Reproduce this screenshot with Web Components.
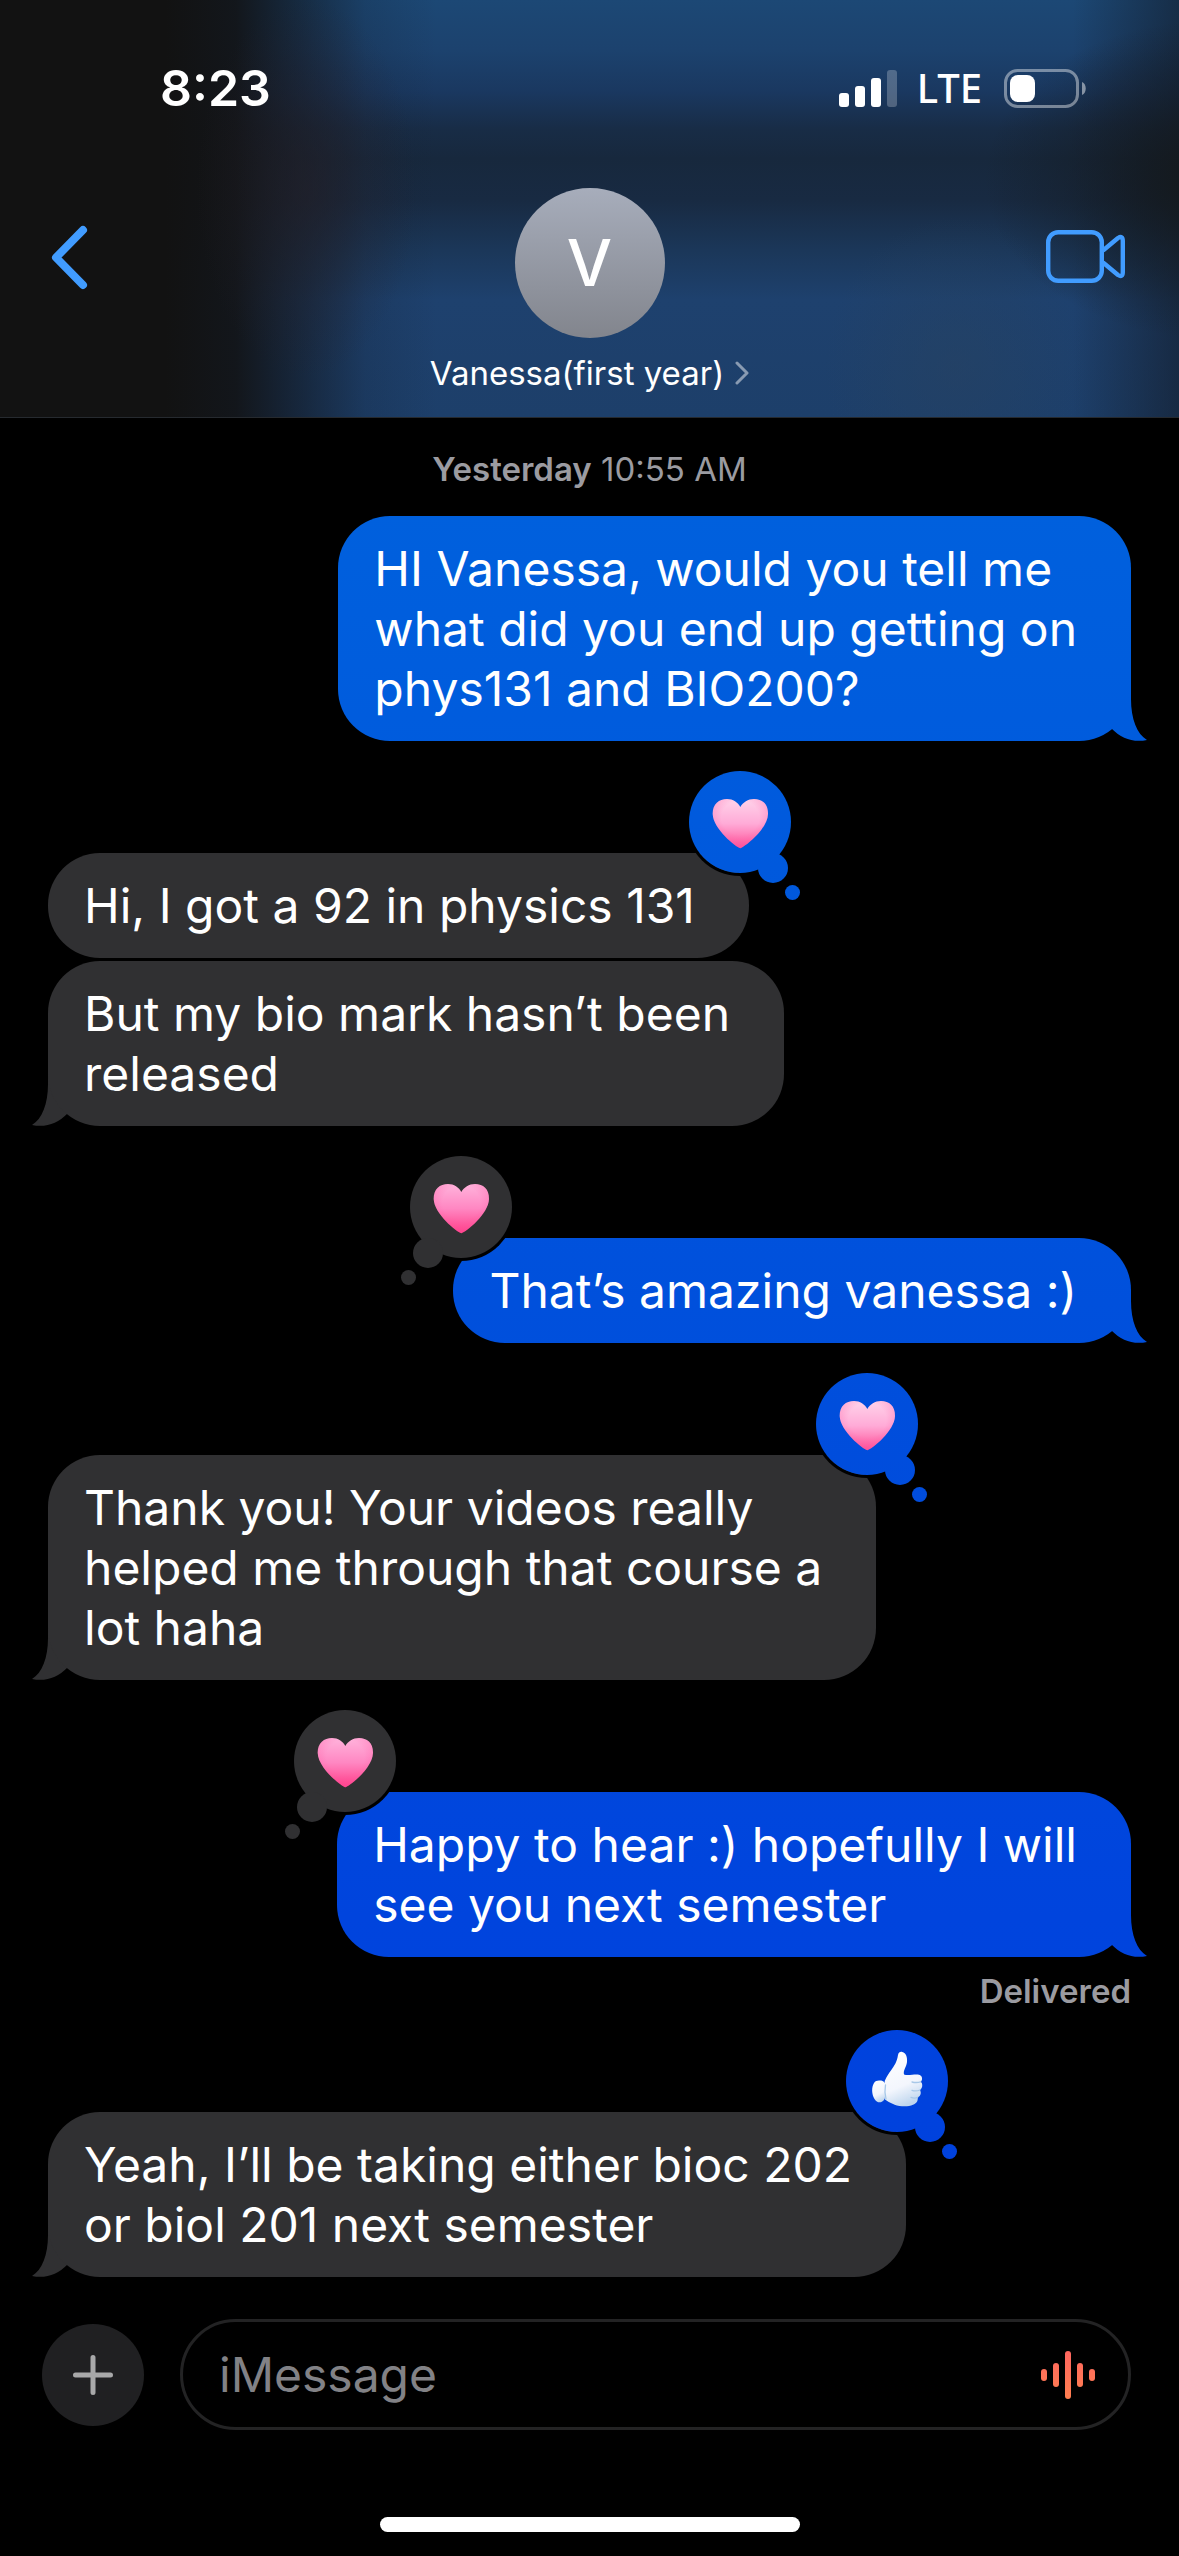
<!DOCTYPE html>
<html lang="en">
<head>
<meta charset="utf-8">
<meta name="viewport" content="width=device-width, initial-scale=1">
<title>Messages</title>
<style>
  :root {
    --sent: linear-gradient(180deg, #0064dc 0%, #0060dd 20%, #005add 32%, #0050dc 51%, #0044dd 75%, #0040dd 90%) fixed;
    --received: #303032;
    --tint: #419cff;
    --muted: #9b9ba1;
  }
  html { background: #000; }
  body {
    margin: 0;
    min-height: 100vh;
    display: flex;
    flex-direction: column;
    background: #000;
    color: #fff;
    font-family: Inter, "Noto Sans", sans-serif;
    font-size: 48px;
    line-height: 60px;
  }
  message-list { flex: 1; }
  chat-message { margin-top: 3px; }
  chat-message[first] { margin-top: 27px; }
  chat-message[reaction] { margin-top: 112px; }
  delivery-receipt + chat-message[reaction] { margin-top: 101px; }
</style>
</head>
<body>
<chat-header>
  <status-bar slot="status" time="8:23" network="LTE"></status-bar>
  <contact-button slot="contact" initial="V">Vanessa(first year)</contact-button>
</chat-header>

<message-list>
  <time-stamp day="Yesterday">10:55 AM</time-stamp>
  <chat-message first sent tail>HI Vanessa, would you tell me<br>what did you end up getting on<br>phys131 and BIO200?</chat-message>
  <chat-message reaction="heart">Hi, I got a 92 in physics 131</chat-message>
  <chat-message tail>But my bio mark hasn’t been<br>released</chat-message>
  <chat-message sent tail reaction="heart">That’s amazing vanessa :)</chat-message>
  <chat-message tail reaction="heart">Thank you! Your videos really<br>helped me through that course a<br>lot haha</chat-message>
  <chat-message sent tail reaction="heart">Happy to hear :) hopefully I will<br>see you next semester</chat-message>
  <delivery-receipt>Delivered</delivery-receipt>
  <chat-message tail reaction="thumb">Yeah, I’ll be taking either bioc 202<br>or biol 201 next semester</chat-message>
</message-list>

<message-composer placeholder="iMessage"></message-composer>
<home-indicator></home-indicator>

<script>
function define(name, render) {
  customElements.define(name, class extends HTMLElement {
    connectedCallback() {
      if (this.shadowRoot) return;
      this.attachShadow({ mode: 'open' }).innerHTML = render(this);
    }
  });
}

define('status-bar', el => `
  <style>
    :host { display: flex; justify-content: space-between; align-items: center; height: 60px; padding: 58px 92px 0 160px; }
    time { font-weight: 600; font-size: 50px; line-height: 60px; }
    .right { display: flex; align-items: center; }
    .net { font-family: "Noto Sans", Inter, sans-serif; font-size: 40px; font-weight: 500; line-height: 60px; margin: 0 22px 0 20px; }
    svg { display: block; }
  </style>
  <time>${el.getAttribute('time')}</time>
  <div class="right">
    <svg width="58" height="38" viewBox="0 0 58 38" fill="#fff" aria-hidden="true">
      <rect x="0" y="24" width="10" height="14" rx="3"/><rect x="16" y="17" width="10" height="21" rx="3"/>
      <rect x="32" y="9" width="10" height="29" rx="3"/><rect x="48" y="1" width="10" height="37" rx="3" opacity=".24"/>
    </svg>
    <span class="net">${el.getAttribute('network')}</span>
    <svg width="83" height="39" viewBox="0 0 83 39" aria-hidden="true">
      <rect x="1.5" y="1.5" width="72" height="36" rx="12" fill="none" stroke="#fff" stroke-opacity=".42" stroke-width="3"/>
      <rect x="6" y="6" width="25" height="27" rx="8" fill="#fff"/>
      <path d="M78 13C83 15 83 24 78 26Z" fill="#fff" fill-opacity=".48"/>
    </svg>
  </div>`);

define('contact-button', el => `
  <style>
    :host { display: block; }
    button { display: flex; flex-direction: column; align-items: center; gap: 15px; padding: 0; border: 0; background: none; color: #fff; font: inherit; }
    .avatar { width: 150px; height: 150px; border-radius: 50%; display: grid; place-items: center;
      background: linear-gradient(#a7adbb, #82858d); font-size: 64px; font-weight: 500; line-height: 64px; }
    .name { display: flex; align-items: center; gap: 11px; font-size: 33px; line-height: 40px; }
  </style>
  <button type="button">
    <span class="avatar"><span>${el.getAttribute('initial')}</span></span>
    <span class="name"><slot></slot><svg width="14" height="24" viewBox="0 0 14 24" fill="none" stroke="#fff" stroke-opacity=".48" stroke-width="3" stroke-linecap="round" stroke-linejoin="round" aria-hidden="true"><path d="M2 2L12 12L2 22"/></svg></span>
  </button>`);

define('chat-header', () => `
  <style>
    :host { display: block; border-bottom: 1px solid #262a2f;
      background:
        radial-gradient(ellipse 110px 190px at 26% 45%, rgba(40,34,42,.5), transparent),
        linear-gradient(90deg, #121212 0%, #121212 14%, rgba(18,19,21,.93) 20%, rgba(18,22,28,.62) 25%, rgba(20,32,48,.2) 31%, transparent 37%),
        radial-gradient(ellipse 230px 160px at 103% 43%, rgba(20,24,26,.95), rgba(20,26,32,.5) 50%, transparent),
        linear-gradient(90deg, transparent 91%, rgba(18,24,34,.55) 100%),
        radial-gradient(ellipse 130px 150px at 81% 88%, rgba(38,66,98,.6), transparent),
        linear-gradient(180deg, #1c4875 0%, #1c426e 12%, #1a3860 22%, #182c46 31%, #17283d 38%, #182a42 48%, #1b3759 60%, #1e416e 72%, #1d3f6a 100%);
    }
    nav { display: grid; grid-template-columns: 1fr auto 1fr; align-items: start; padding: 70px 51px 24px; }
    .icon { padding: 0; border: 0; background: none; color: var(--tint); margin-top: 36px; }
    .video { justify-self: end; margin-top: 42px; }
    .back { justify-self: start; }
    svg { display: block; }
  </style>
  <slot name="status"></slot>
  <nav>
    <button class="icon back" type="button" aria-label="Back">
      <svg width="40" height="67" viewBox="0 0 40 67" fill="none" stroke="currentColor" stroke-width="8" stroke-linecap="round" stroke-linejoin="round"><path d="M32 6L5 33.500L32 61"/></svg>
    </button>
    <slot name="contact"></slot>
    <button class="icon video" type="button" aria-label="Video call">
      <svg width="82" height="54" viewBox="0 0 82 54" fill="none" stroke="currentColor" stroke-width="4.400" stroke-linejoin="round"><rect x="2.200" y="2.200" width="53.600" height="48.600" rx="10"/><path d="M57 20.500L72 8Q76.800 5 76.800 11V42Q76.800 48 72 45L57 32.500"/></svg>
    </button>
  </nav>`);

define('message-list', () => `
  <style>:host { display: flex; flex-direction: column; padding: 31px 48px 0; }</style>
  <slot></slot>`);

define('time-stamp', el => `
  <style>
    :host { display: block; text-align: center; color: var(--muted); font-size: 33px; line-height: 40px; }
    b { font-weight: 600; }
  </style>
  <b>${el.getAttribute('day')}</b> <slot></slot>`);

define('delivery-receipt', () => `
  <style>:host { display: block; margin-top: 14px; text-align: right; color: var(--muted); font-size: 33px; font-weight: 600; line-height: 40px; }</style>
  <slot></slot>`);

define('chat-message', el => `
  <style>
    :host { display: block; position: relative; isolation: isolate; width: fit-content; align-self: flex-start; }
    :host([sent]) { align-self: flex-end; }
    .bubble { padding: 23px 54px 22px 36px; border-radius: 52px; background: var(--received); white-space: nowrap; }
    :host([sent]) .bubble { background: var(--sent); }
    :host([tail])::after { content: ""; position: absolute; z-index: -1; bottom: 0; left: -16px; width: 64px; height: 52px;
      background: var(--received); clip-path: path("M64 0L16 0L16 10C16 30 10 45 0 51C14 54 26 49 35 40L64 10Z"); }
    :host([sent][tail])::after { left: auto; right: -16px; background: var(--sent);
      clip-path: path("M0 0L48 0L48 10C48 30 54 45 64 51C50 54 38 49 29 40L0 10Z"); }
    tap-back { position: absolute; top: -82px; right: -42px; }
    :host([sent]) tap-back { right: auto; left: -43px; }
  </style>
  <div class="bubble"><slot></slot></div>
  ${el.hasAttribute('reaction') ? `<tap-back kind="${el.getAttribute('reaction')}" ${el.hasAttribute('sent') ? 'theirs' : ''}></tap-back>` : ''}`);

const reactions = {
  heart: theirs => `
    <defs>
      <linearGradient id="g" x1="0" y1="0" x2="0" y2="1"><stop offset="0" stop-color="${theirs ? '#ffb3dc' : '#ffd3ea'}"/><stop offset=".5" stop-color="${theirs ? '#ff87c2' : '#ffabd7'}"/><stop offset="1" stop-color="${theirs ? '#ff3e88' : '#ff5299'}"/></linearGradient>
      <radialGradient id="s" cx=".5" cy=".38" r=".62"><stop offset=".55" stop-color="#ff4f9c" stop-opacity="0"/><stop offset="1" stop-color="#ff4f9c" stop-opacity=".38"/></radialGradient>
    </defs>
    <path fill="url(#g)" d="M51.300 77.300C47 76 24 58 23.700 43C23.500 33 30 28 38 28C44 28 49 31.500 51.300 36C54 31.500 59 28 65 28C73 28 79.300 33 79 43C78.700 58 56 76 51.300 77.300Z"/>
    <path fill="url(#s)" d="M51.300 77.300C47 76 24 58 23.700 43C23.500 33 30 28 38 28C44 28 49 31.500 51.300 36C54 31.500 59 28 65 28C73 28 79.300 33 79 43C78.700 58 56 76 51.300 77.300Z"/>`,
  thumb: () => `
    <defs>
      <linearGradient id="t" x1=".2" y1="0" x2=".5" y2="1"><stop offset="0" stop-color="#fff"/><stop offset=".65" stop-color="#f3f6fd"/><stop offset="1" stop-color="#bfd6ee"/></linearGradient>
    </defs>
    <path fill="url(#t)" d="M38.700 51C41 46 43 43 45.300 40C48 36 51 32 52 25C52.500 22 54.500 21.600 56.300 22C60 23 61.500 27 61 32C60.500 37 57 40 58 44.500C62 46 68 44 73 44.700C76.500 45.500 77 50 74.700 51.700C76.800 53 77 58 73.900 60C75.500 62.500 75 66 71.700 67.300C72.200 71 70.500 73.500 67 74.700C62 77 54 76.500 48.700 74.700C44 73 41 71 38.500 69Z"/>
    <path fill="url(#t)" d="M33 50.500C36 50 39.500 51.500 39.500 56C39.500 61 40 66 38 70C35 73.500 31 73 28.500 69C25.500 64 25.500 57 28 53C29.200 51.200 31 50.600 33 50.500Z"/>
    <path fill="none" stroke="#a8c8e8" stroke-width="1.300" stroke-linecap="round" d="M74.700 51.800C71 53 68 52.500 66 52M73.900 60C71 61.200 68 61 66 60.300M71.700 67.400C69 68.500 66.500 68 65 67.400M39.500 55C38.500 60 39 65 40 69"/>`
};

define('tap-back', el => `
  <style>
    :host { display: block; width: 102px; height: 102px; z-index: 1; }
    .disc, .dot { border-radius: 50%; background: var(--sent); }
    :host([theirs]) .disc, :host([theirs]) .dot { background: var(--received); }
    .disc { width: 102px; height: 102px; box-shadow: 0 0 0 3px #000; }
    .dot { position: absolute; }
    .mid { width: 30px; height: 30px; top: 82px; left: 69px; }
    .small { width: 15px; height: 15px; top: 114px; left: 96px; }
    :host([theirs]) .mid { left: 3px; }
    :host([theirs]) .small { left: -9px; }
    svg { display: block; }
  </style>
  <div class="disc"><svg width="102" height="102" viewBox="0 0 102 102" role="img" aria-label="${el.getAttribute('kind')}">${reactions[el.getAttribute('kind')](el.hasAttribute('theirs'))}</svg></div>
  <div class="dot mid"></div><div class="dot small"></div>`);

define('message-composer', el => `
  <style>
    :host { display: flex; align-items: center; gap: 36px; padding: 42px 48px 87px 42px; }
    button { padding: 0; border: 0; background: none; }
    .add { flex: none; display: grid; place-items: center; width: 102px; height: 102px; border-radius: 50%; background: #202022; }
    .field { flex: 1; display: flex; align-items: center; box-sizing: border-box; height: 111px; padding: 0 33px 0 36px; border: 3px solid #232324; border-radius: 56px; }
    input { flex: 1; min-width: 0; height: 60px; padding: 0; border: 0; outline: 0; background: none; color: #fff; font: inherit; }
    input::placeholder { color: #828286; opacity: 1; }
    svg { display: block; }
  </style>
  <button class="add" type="button" aria-label="Add attachment">
    <svg width="40" height="40" viewBox="0 0 40 40" stroke="#a8a8a9" stroke-width="5" stroke-linecap="round"><path d="M20 2.500V37.500M2.500 20H37.500"/></svg>
  </button>
  <div class="field">
    <input type="text" aria-label="Message" placeholder="${el.getAttribute('placeholder')}">
    <button type="button" aria-label="Record audio">
      <svg width="54" height="48" viewBox="0 0 54 48">
        <defs><linearGradient id="w" x1="0" y1="0" x2="0" y2="48" gradientUnits="userSpaceOnUse"><stop offset="0" stop-color="#ff665f"/><stop offset="1" stop-color="#ff7f50"/></linearGradient></defs>
        <g fill="url(#w)"><rect y="18" width="6" height="12" rx="3"/><rect x="12" y="12" width="6" height="24" rx="3"/><rect x="24" width="6" height="48" rx="3"/><rect x="36" y="12" width="6" height="24" rx="3"/><rect x="48" y="18" width="6" height="12" rx="3"/></g>
      </svg>
    </button>
  </div>`);

define('home-indicator', () => `
  <style>
    :host { display: flex; justify-content: center; padding-bottom: 24px; }
    div { width: 420px; height: 15px; border-radius: 8px; background: #fff; }
  </style>
  <div></div>`);
</script>
</body>
</html>
